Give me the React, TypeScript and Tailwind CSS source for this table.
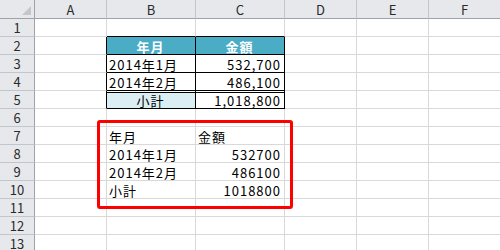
const COLS = ['A', 'B', 'C', 'D', 'E', 'F'];
const ROWS = Array.from({ length: 13 }, (_, i) => i + 1);

type CellDef = { text: string; cls: string };

// cell contents and per-cell border/fill overrides
const cells: Record<string, CellDef> = {
  B1: { text: '', cls: 'border-r-[#d9d9d9] border-b-black' },
  C1: { text: '', cls: 'border-r-[#d9d9d9] border-b-black' },
  A2: { text: '', cls: 'border-r-black border-b-[#d9d9d9]' },
  A3: { text: '', cls: 'border-r-black border-b-[#d9d9d9]' },
  A4: { text: '', cls: 'border-r-black border-b-[#d9d9d9]' },
  A5: { text: '', cls: 'border-r-black border-b-[#d9d9d9]' },
  B2: { text: '年月', cls: 'border-black bg-[#4bacc6] text-white font-bold justify-center' },
  C2: { text: '金額', cls: 'border-black bg-[#4bacc6] text-white font-bold justify-center' },
  B3: { text: '2014年1月', cls: 'border-black' },
  C3: { text: '532,700', cls: 'border-black justify-end' },
  B4: { text: '2014年2月', cls: 'border-black' },
  C4: { text: '486,100', cls: 'border-black justify-end' },
  B5: {
    text: '小計',
    cls: 'border-black bg-[#daeef3] justify-center shadow-[inset_0_1px_0_#ffffff,inset_0_2px_0_#000000]',
  },
  C5: { text: '1,018,800', cls: 'border-black justify-end shadow-[inset_0_1px_0_#ffffff,inset_0_2px_0_#000000]' },
  B7: { text: '年月', cls: 'border-[#d9d9d9]' },
  C7: { text: '金額', cls: 'border-[#d9d9d9]' },
  B8: { text: '2014年1月', cls: 'border-[#d9d9d9]' },
  C8: { text: '532700', cls: 'border-[#d9d9d9] justify-end' },
  B9: { text: '2014年2月', cls: 'border-[#d9d9d9]' },
  C9: { text: '486100', cls: 'border-[#d9d9d9] justify-end' },
  B10: { text: '小計', cls: 'border-[#d9d9d9]' },
  C10: { text: '1018800', cls: 'border-[#d9d9d9] justify-end' },
};

function Cell({ id }: { id: string }) {
  const def = cells[id];
  return (
    <div
      className={`box-border flex items-center border-r border-b pl-[2px] pr-[3px] pt-[1px] text-[13px] leading-none tracking-[1px] text-black whitespace-nowrap ${
        def ? def.cls : 'border-[#d9d9d9]'
      }`}
    >
      {def?.text}
    </div>
  );
}

export default function App() {
  return (
    <div className="relative w-[500px] h-[250px] overflow-hidden bg-white font-['Noto_Sans_CJK_JP',sans-serif]">
      <div className="grid grid-cols-[35px_72px_89px_89px_72px_72px_72px] grid-rows-[19px_repeat(13,18px)]">
        {/* select-all corner */}
        <div className="relative box-border border-r border-b border-r-[#9ea3a9] border-b-[#9ea3a9] bg-[#e6e8ec]">
          <svg className="absolute right-[3px] bottom-[3px]" width="9" height="9" viewBox="0 0 9 9">
            <polygon points="9,0 9,9 0,9" fill="#c3c6ca" />
          </svg>
        </div>
        {COLS.map((c) => (
          <div
            key={c}
            className="box-border flex items-center justify-center border-r border-b border-r-[#c2c5ca] border-b-[#9ea3a9] bg-[#e6e8ec] text-[13px] leading-none text-[#2a2a2a]"
          >
            {c}
          </div>
        ))}
        {ROWS.map((r) => [
          <div
            key={`h${r}`}
            className="box-border flex items-center justify-center border-r border-b border-r-[#9ea3a9] border-b-[#c2c5ca] bg-[#e6e8ec] text-[13px] leading-none text-[#2a2a2a]"
          >
            {r}
          </div>,
          ...COLS.map((c) => <Cell key={`${c}${r}`} id={`${c}${r}`} />),
        ])}
      </div>
      {/* highlight box around the plain-value copy */}
      <div className="absolute left-[97px] top-[120px] w-[196px] h-[89px] box-border border-[3px] border-[#ff0000] rounded-[3px]" />
    </div>
  );
}
